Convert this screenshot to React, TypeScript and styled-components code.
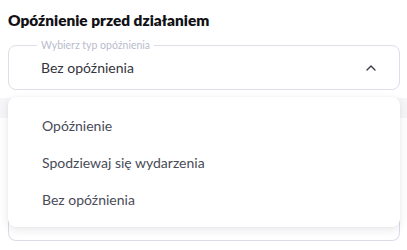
import { createGlobalStyle } from "styled-components";
import styled from "styled-components";
import { ChevronUp } from "lucide-react";

const GlobalStyle = createGlobalStyle`
  html, body {
    margin: 0;
    padding: 0;
    background: #ffffff;
  }
  body {
    font-family: Lato, "Noto Sans", sans-serif;
  }
`;

const Page = styled.div`
  position: relative;
  width: 407px;
  height: 250px;
  overflow: hidden;
  padding: 0 7px 0 8px;
  box-sizing: border-box;
`;

const Title = styled.h3`
  margin: 0;
  padding-top: 11px;
  height: 45px;
  box-sizing: border-box;
  font-size: 15.4px;
  font-weight: 800;
  color: #111116;
`;

const Field = styled.div`
  position: relative;
  height: 45px;
  box-sizing: border-box;
  border: 1px solid #dedde9;
  border-radius: 8px;
  padding: 0 20px 0 32px;
  display: flex;
  align-items: center;
  justify-content: space-between;
`;

const Legend = styled.span`
  position: absolute;
  left: 28px;
  top: -7px;
  padding: 0 4px;
  background: #ffffff;
  font-size: 10.5px;
  line-height: 12px;
  color: #b9bccd;
`;

const Value = styled.span`
  font-size: 14px;
  color: #33343c;
  margin-top: -1px;
`;

const Chevron = styled(ChevronUp)`
  color: #3a3b44;
`;

const Band = styled.div`
  margin: 8px -7px 0 -8px;
  height: 20px;
  background: #f6f6f8;
`;

const Box = styled.div`
  height: 122px;
  border: 1px solid #dcdbea;
  border-top: none;
  border-radius: 0 0 8px 8px;
  background: #ffffff;
`;

const Menu = styled.ul`
  position: absolute;
  left: 8px;
  top: 97px;
  width: 392px;
  height: 130px;
  margin: 0;
  padding: 10px 0 9px;
  box-sizing: border-box;
  list-style: none;
  background: #ffffff;
  border-radius: 8px;
  box-shadow: 0 3px 10px rgba(30, 30, 60, 0.1), 0 0 2px rgba(30, 30, 60, 0.05);
`;

const Item = styled.li`
  height: 37px;
  display: flex;
  align-items: center;
  padding-left: 34px;
  font-size: 14px;
  color: #484b57;
`;

const options = ["Opóźnienie", "Spodziewaj się wydarzenia", "Bez opóźnienia"];

export default function App() {
  return (
    <Page>
      <GlobalStyle />
      <Title>Opóźnienie przed działaniem</Title>
      <Field>
        <Legend>Wybierz typ opóźnienia</Legend>
        <Value>Bez opóźnienia</Value>
        <Chevron size={16} strokeWidth={2} />
      </Field>
      <Band />
      <Box />
      <Menu>
        {options.map((o) => (
          <Item key={o}>{o}</Item>
        ))}
      </Menu>
    </Page>
  );
}
